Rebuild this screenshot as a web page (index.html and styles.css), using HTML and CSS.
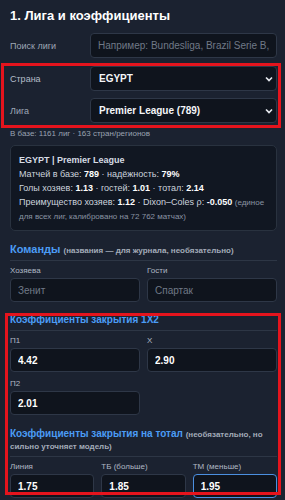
FILE: index.html
```
<!DOCTYPE html>
<html lang="ru">
<head>
    <meta charset="UTF-8">
    <meta name="viewport" content="width=device-width, initial-scale=1.0">
    <title>Лига и коэффициенты</title>
    <link rel="stylesheet" href="styles.css">
</head>
<body>
<div class="panel">
    <h2 class="title">1. Лига и коэффициенты</h2>

    <div class="row">
        <label class="row-label">Поиск лиги</label>
        <input class="field" type="text" placeholder="Например: Bundesliga, Brazil Serie B, 'Premier'">
    </div>

    <div class="mark mark-league">
        <div class="row">
            <label class="row-label light">Страна</label>
            <div class="select-wrap">
                <select class="field select">
                    <option>EGYPT</option>
                </select>
                <svg class="chevron" width="8" height="6" viewBox="0 0 8 6"><path d="M1 1.5 L4 4.5 L7 1.5" fill="none" stroke="#e6e9ee" stroke-width="1.6"/></svg>
            </div>
        </div>
        <div class="row">
            <label class="row-label">Лига</label>
            <div class="select-wrap">
                <select class="field select">
                    <option>Premier League (789)</option>
                </select>
                <svg class="chevron" width="8" height="6" viewBox="0 0 8 6"><path d="M1 1.5 L4 4.5 L7 1.5" fill="none" stroke="#e6e9ee" stroke-width="1.6"/></svg>
            </div>
        </div>
    </div>

    <p class="hint">В базе: 1161 лиг · 163 стран/регионов</p>

    <div class="info">
        <div class="info-head">EGYPT | Premier League</div>
        <div>Матчей в базе: <b>789</b> · надёжность: <b>79%</b></div>
        <div>Голы хозяев: <b>1.13</b> · гостей: <b>1.01</b> · тотал: <b>2.14</b></div>
        <div>Преимущество хозяев: <b>1.12</b> · Dixon–Coles ρ: <b>-0.050</b> <span class="note">(единое для всех лиг, калибровано на 72 762 матчах)</span></div>
    </div>

    <h3 class="sec teams">Команды <small>(названия — для журнала, необязательно)</small></h3>
    <div class="grid2">
        <div>
            <label class="lbl">Хозяева</label>
            <input class="field" type="text" placeholder="Зенит">
        </div>
        <div>
            <label class="lbl">Гости</label>
            <input class="field" type="text" placeholder="Спартак">
        </div>
    </div>

    <div class="mark mark-odds">
        <h3 class="sec first">Коэффициенты закрытия 1X2</h3>
        <div class="grid2 odds">
            <div>
                <label class="lbl">П1</label>
                <input class="field val" type="text" value="4.42">
            </div>
            <div>
                <label class="lbl">X</label>
                <input class="field val" type="text" value="2.90">
            </div>
            <div>
                <label class="lbl">П2</label>
                <input class="field val" type="text" value="2.01">
            </div>
        </div>

        <h3 class="sec total">Коэффициенты закрытия на тотал <small>(необязательно, но сильно уточняет модель)</small></h3>
        <div class="grid3">
            <div>
                <label class="lbl">Линия</label>
                <input class="field val" type="text" value="1.75">
            </div>
            <div>
                <label class="lbl">ТБ (больше)</label>
                <input class="field val" type="text" value="1.85">
            </div>
            <div>
                <label class="lbl">ТМ (меньше)</label>
                <input class="field val focus" type="text" value="1.95">
            </div>
        </div>
    </div>
</div>
</body>
</html>
```

FILE: styles.css
```
body{
    margin: 0;
    background-color: #1b2230;
    font-family: "Liberation Sans", Arial, sans-serif;
    color: #d3d9e2;
}
.panel{
    padding: 8px 8px 3px 10px;
}
.title{
    margin: 0 0 9px 0;
    font-size: 13px;
    line-height: 16px;
    color: #ffffff;
    font-weight: bold;
}
.row{
    display: flex;
    align-items: center;
    margin-bottom: 7px;
}
.row-label{
    width: 80px;
    flex-shrink: 0;
    font-size: 9px;
    color: #9ea8b6;
}
.row-label.light{
    color: #b4bdc9;
}
.field{
    box-sizing: border-box;
    width: 100%;
    height: 25px;
    padding: 0 7px;
    background-color: #0f141d;
    border: 1px solid #2e3747;
    border-radius: 4px;
    color: #ffffff;
    font-family: "Liberation Sans", Arial, sans-serif;
    font-size: 10px;
    outline: none;
}
.field::placeholder{
    color: #6f7987;
}
.select-wrap{
    position: relative;
    flex: 1;
}
.select{
    appearance: none;
    -webkit-appearance: none;
    padding: 0 8px;
    font-weight: bold;
    color: #f4f6f9;
}
.chevron{
    position: absolute;
    right: 4px;
    top: 10px;
    pointer-events: none;
}
.mark{
    position: relative;
}
.mark::after{
    content: '';
    position: absolute;
    border: 3px solid #e5141d;
    pointer-events: none;
}
.mark-league{
    margin-top: 8px;
    padding-bottom: 1px;
}
.mark-league::after{
    left: -9px;
    right: -4px;
    top: -3px;
    bottom: -4px;
}
.mark-league .row:last-child{
    margin-bottom: 0;
}
.hint{
    margin: 5px 0 7px 0;
    font-size: 8px;
    color: #9aa3b1;
}
.info{
    background-color: #111722;
    border: 1px solid #29323f;
    border-radius: 5px;
    padding: 7px 8px;
    font-size: 9px;
    line-height: 14px;
    color: #cdd4de;
}
.info b{
    color: #ffffff;
}
.info-head{
    font-weight: bold;
    color: #d6dce5;
}
.note{
    font-size: 8px;
    line-height: 10px;
    color: #8a94a3;
}
.sec{
    margin: 0;
    font-size: 11px;
    font-weight: bold;
    color: #4b9cf5;
    line-height: 13px;
    padding-bottom: 4px;
    border-bottom: 1px solid #2d3645;
}
.sec small{
    font-size: 8px;
    line-height: 10px;
    color: #a3acb9;
}
.teams{
    margin-top: 12px;
}
.first{
    font-size: 10px;
}
.total{
    margin-top: 13px;
    font-size: 10px;
    line-height: 12px;
}
.lbl{
    display: block;
    font-size: 8px;
    line-height: 10px;
    color: #b0b8c4;
    margin-top: 5px;
    margin-bottom: 2px;
}
.grid2{
    display: grid;
    grid-template-columns: 1fr 1fr;
    column-gap: 7px;
}
.odds{
    row-gap: 2px;
}
.grid3{
    display: grid;
    grid-template-columns: 1fr 1fr 1fr;
    column-gap: 7px;
}
.grid2 .field,
.grid3 .field{
    height: 24px;
}
.val{
    font-weight: bold;
}
.focus{
    border-color: #4b8fe0;
}
.mark-odds{
    margin-top: 11px;
}
.mark-odds::after{
    left: -5px;
    right: -4px;
    top: 0;
    bottom: 3px;
}
```
